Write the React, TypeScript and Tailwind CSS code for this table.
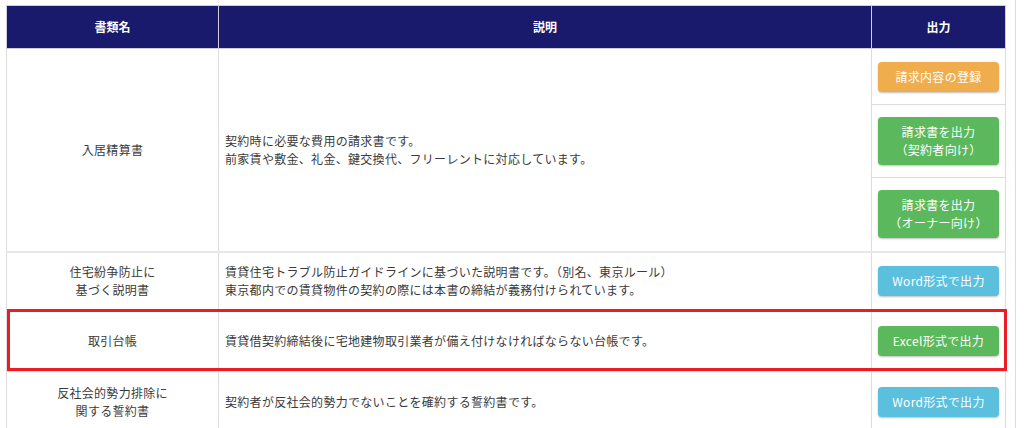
import React from 'react';

type BtnColor = 'orange' | 'green' | 'blue';

const btnColors: Record<BtnColor, string> = {
  orange: 'bg-[#f0ad4e]',
  green: 'bg-[#5cb85c]',
  blue: 'bg-[#5bc0de]',
};

function OutBtn({ color, lines }: { color: BtnColor; lines: string[] }) {
  return (
    <div
      className={[
        'mx-auto w-[121px] rounded-[4px] py-[6px] text-center text-[12px] leading-[18px] text-white',
        'shadow-[0_1px_2px_rgba(0,0,0,0.25)]',
        btnColors[color],
      ].join(' ')}
    >
      {lines.map((l) => (
        <div key={l}>{l}</div>
      ))}
    </div>
  );
}

const th = 'border border-[#cfcfd8] bg-[#1a1a6c] text-center text-[12px] font-bold text-white';
const td = 'border border-[#dddddd] align-middle text-[12px] leading-[18px] tracking-[0.3px] text-[#3a3a3a]';

export default function App() {
  return (
    <div
      className="h-[428px] w-[1024px] overflow-hidden bg-white"
      style={{ fontFamily: '"Noto Sans CJK JP", "Noto Sans", sans-serif' }}
    >
      <div className="relative h-[428px] w-[1016px] border-r border-[#dddddd] pl-[6px] pt-[5px]">
        <table className="w-[999px] table-fixed border-collapse">
          <colgroup>
            <col className="w-[212px]" />
            <col className="w-[653px]" />
            <col className="w-[134px]" />
          </colgroup>
          <thead>
            <tr className="h-[43px]">
              <th className={th}>書類名</th>
              <th className={th}>説明</th>
              <th className={th}>出力</th>
            </tr>
          </thead>
          <tbody>
            <tr className="h-[56px]">
              <td rowSpan={3} className={td + ' text-center'}>
                入居精算書
              </td>
              <td rowSpan={3} className={td + ' pl-[6px]'}>
                契約時に必要な費用の請求書です。
                <br />
                前家賃や敷金、礼金、鍵交換代、フリーレントに対応しています。
              </td>
              <td className={td}>
                <OutBtn color="orange" lines={['請求内容の登録']} />
              </td>
            </tr>
            <tr className="h-[73px]">
              <td className={td}>
                <OutBtn color="green" lines={['請求書を出力', '（契約者向け）']} />
              </td>
            </tr>
            <tr className="h-[74px]">
              <td className={td}>
                <OutBtn color="green" lines={['請求書を出力', '（オーナー向け）']} />
              </td>
            </tr>
            <tr className="h-[59px] border-t-2 border-[#e8e8e8]">
              <td className={td + ' text-center'}>
                住宅紛争防止に
                <br />
                基づく説明書
              </td>
              <td className={td + ' pl-[6px]'}>
                賃貸住宅トラブル防止ガイドラインに基づいた説明書です。（別名、東京ルール）
                <br />
                東京都内での賃貸物件の契約の際には本書の締結が義務付けられています。
              </td>
              <td className={td}>
                <OutBtn color="blue" lines={['Word形式で出力']} />
              </td>
            </tr>
            <tr className="h-[61px]">
              <td className={td + ' text-center'}>取引台帳</td>
              <td className={td + ' pl-[6px]'}>
                賃貸借契約締結後に宅地建物取引業者が備え付けなければならない台帳です。
              </td>
              <td className={td}>
                <OutBtn color="green" lines={['Excel形式で出力']} />
              </td>
            </tr>
            <tr className="h-[60px]">
              <td className={td + ' text-center'}>
                反社会的勢力排除に
                <br />
                関する誓約書
              </td>
              <td className={td + ' pl-[6px]'}>
                契約者が反社会的勢力でないことを確約する誓約書です。
              </td>
              <td className={td}>
                <OutBtn color="blue" lines={['Word形式で出力']} />
              </td>
            </tr>
          </tbody>
        </table>
        {/* highlight around 取引台帳 row */}
        <div className="pointer-events-none absolute left-[7px] top-[309px] h-[62px] w-[1000px] border-[3px] border-[#ed1c24]" />
      </div>
    </div>
  );
}
